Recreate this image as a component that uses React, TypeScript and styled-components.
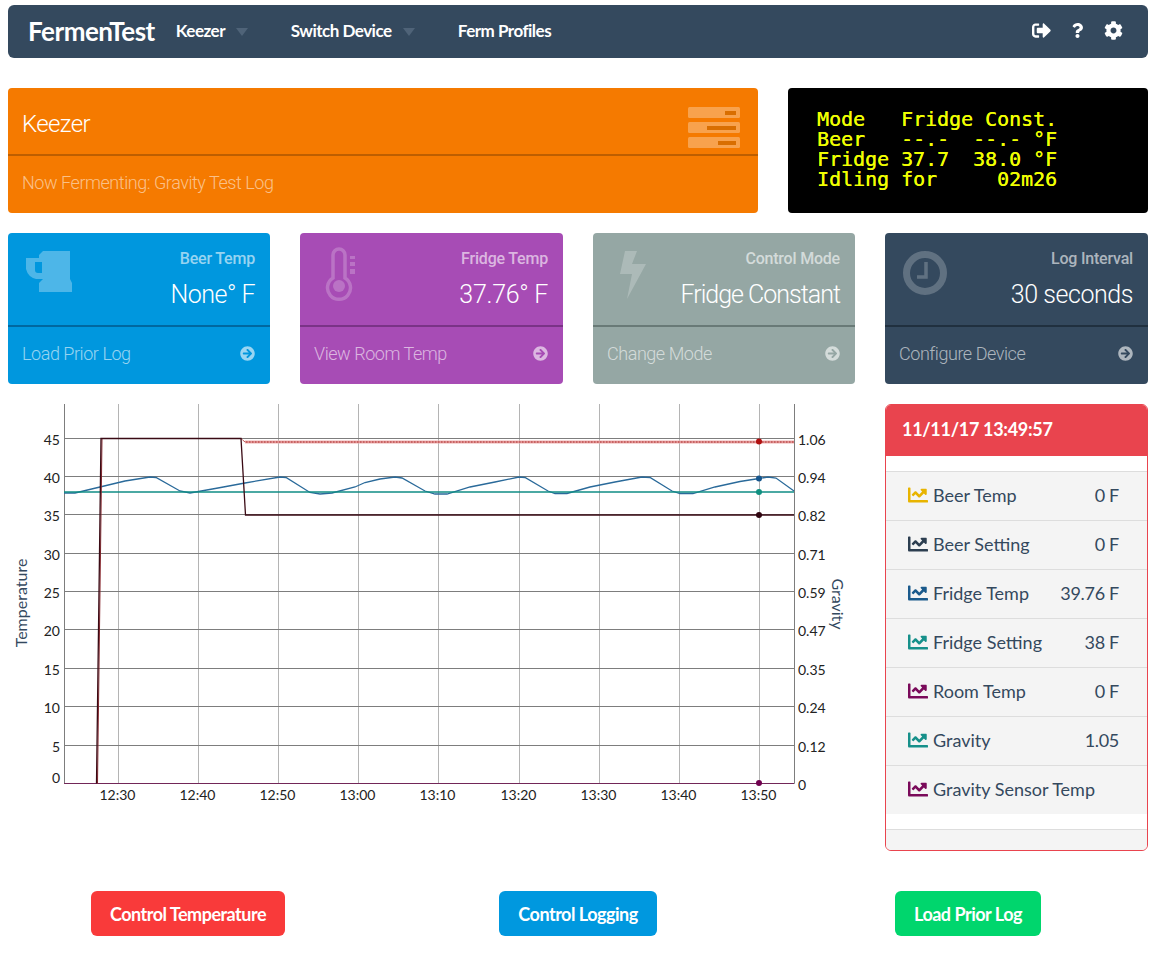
import React from 'react';
import styled, { createGlobalStyle } from 'styled-components';
import { FaArrowCircleRight, FaChartLine, FaCog, FaQuestion, FaSignOutAlt } from 'react-icons/fa';

/* -------------------- Style ------------------- */
const GlobalStyle = createGlobalStyle`
  html, body {
    margin: 0;
    padding: 0;
    background: #fff;
  }
  body {
    font-family: Lato, "Liberation Sans", sans-serif;
    color: #34495e;
  }
`;

const lightFont = `Roboto, "Liberation Sans", sans-serif`;

const Page = styled.div`
  width: 1140px;
  margin-left: 8px;
  padding-top: 5px;
  padding-bottom: 33px;
`;

const Navbar = styled.nav`
  display: flex;
  align-items: center;
  box-sizing: border-box;
  height: 53px;
  padding: 0 25px 2px 20px;
  margin-bottom: 30px;
  background: #34495e;
  border-radius: 6px;
  color: #fff;
`;

const Brand = styled.div`
  font-size: 26px;
  font-weight: 700;
  letter-spacing: -0.5px;
  margin-right: 21px;
`;

const NavItem = styled.div<{ $width: number }>`
  display: flex;
  align-items: center;
  width: ${(p) => p.$width}px;
  font-size: 17px;
  font-weight: 700;
  letter-spacing: -0.5px;
`;

const Caret = styled.span`
  width: 0;
  height: 0;
  margin-left: 11px;
  margin-top: 3px;
  border-left: 6px solid transparent;
  border-right: 6px solid transparent;
  border-top: 8px solid #4f6378;
`;

const NavIcons = styled.div`
  display: flex;
  align-items: center;
  gap: 19px;
  margin-left: auto;
  svg {
    display: block;
  }
`;

const TopRow = styled.div`
  display: grid;
  grid-template-columns: 750px 360px;
  gap: 30px;
  height: 125px;
  margin-bottom: 20px;
`;

const Banner = styled.section`
  display: flex;
  flex-direction: column;
  background: #f57a00;
  border-radius: 4px;
  color: #fff;
  font-family: ${lightFont};
  font-weight: 300;
`;

const BannerHead = styled.div`
  display: flex;
  align-items: center;
  justify-content: space-between;
  box-sizing: border-box;
  height: 68px;
  padding: 6px 18px 0 14px;
  border-bottom: 2px solid #bd5e00;
  font-size: 24px;
  letter-spacing: -0.6px;
`;

const ServerIcon = styled.svg`
  margin-top: 6px;
`;

const BannerFoot = styled.div`
  flex: 1;
  display: flex;
  align-items: center;
  padding: 0 0 4px 14px;
  font-size: 18px;
  letter-spacing: -0.45px;
  color: rgba(255, 255, 255, 0.55);
`;

const Lcd = styled.pre`
  margin: 0;
  padding: 22px 0 0 29px;
  background: #000;
  border-radius: 4px;
  color: #f0ff00;
  font-family: "DejaVu Sans Mono", "Liberation Mono", monospace;
  font-size: 19.93px;
  line-height: 20px;
  text-shadow: 0.25px 0 0 currentColor;
`;

const CardRow = styled.div`
  display: grid;
  grid-template-columns: 262px 263px 262px 263px;
  gap: 30px;
  height: 151px;
  margin-bottom: 20px;
`;

const Card = styled.article<{ $bg: string }>`
  display: flex;
  flex-direction: column;
  background: ${(p) => p.$bg};
  border-radius: 4px;
  color: #fff;
  font-family: ${lightFont};
`;

const CardHead = styled.div<{ $line: string }>`
  position: relative;
  box-sizing: border-box;
  height: 94px;
  padding: 17px 15px 0;
  border-bottom: 2px solid ${(p) => p.$line};
  text-align: right;
`;

const CardIcon = styled.svg`
  position: absolute;
  left: 0;
  top: 0;
`;

const CardTitle = styled.div`
  font-size: 16px;
  line-height: 18px;
  font-weight: 500;
  letter-spacing: -0.2px;
  color: rgba(255, 255, 255, 0.6);
`;

const CardValue = styled.div<{ $spacing: number }>`
  margin-top: 12px;
  font-size: 25px;
  line-height: 30px;
  font-weight: 300;
  letter-spacing: ${(p) => p.$spacing}px;
`;

const CardFoot = styled.div`
  flex: 1;
  display: flex;
  align-items: center;
  justify-content: space-between;
  padding: 0 15px 5px 14px;
  font-size: 18px;
  font-weight: 300;
  letter-spacing: -0.45px;
  color: rgba(255, 255, 255, 0.6);
`;

const MainRow = styled.div`
  display: grid;
  grid-template-columns: 847px 263px;
  gap: 30px;
  height: 447px;
  margin-bottom: 40px;
`;

const ChartSvg = styled.svg`
  display: block;
  font-family: Lato, sans-serif;
`;

const StatusPanel = styled.aside`
  display: flex;
  flex-direction: column;
  box-sizing: border-box;
  border: 1px solid #e9444e;
  border-radius: 6px;
  overflow: hidden;
`;

const StatusHead = styled.div`
  height: 51px;
  padding: 0 0 0 16px;
  background: #e9444e;
  color: #fff;
  font-size: 18px;
  font-weight: 700;
  letter-spacing: -0.3px;
  line-height: 49px;
`;

const StatusList = styled.ul`
  list-style: none;
  margin: 15px 0;
  padding: 0;
`;

const StatusItem = styled.li`
  display: flex;
  align-items: center;
  justify-content: space-between;
  box-sizing: border-box;
  height: 49px;
  padding: 0 28px 2px 22px;
  background: #f4f4f4;
  border-top: 1px solid #ddd;
  font-size: 18px;
`;

const StatusName = styled.span<{ $color: string }>`
  display: flex;
  align-items: center;
  gap: 5px;
  svg {
    color: ${(p) => p.$color};
  }
`;

const StatusValue = styled.span`
  letter-spacing: -0.3px;
`;

const StatusFoot = styled.div`
  flex: 1;
  background: #f4f4f4;
  border-top: 1px solid #ddd;
`;

const ActionRow = styled.div`
  display: grid;
  grid-template-columns: repeat(3, 390px);
  margin: 0 -15px;
  justify-items: center;
`;

const ActionButton = styled.button<{ $bg: string }>`
  height: 45px;
  padding: 0 19px;
  border: 0;
  border-radius: 6px;
  background: ${(p) => p.$bg};
  color: #fff;
  font-family: Lato, sans-serif;
  font-size: 18px;
  font-weight: 700;
  letter-spacing: -0.5px;
`;

/* -------------------- Data -------------------- */
const lcdText = `Mode   Fridge Const.
Beer   --.-  --.- °F
Fridge 37.7  38.0 °F
Idling for     02m26`;

const ICON = 'rgba(255,255,255,0.3)';
const ICON_SOFT = 'rgba(255,255,255,0.22)';

const cards = [
  {
    title: 'Beer Temp', value: 'None° F', foot: 'Load Prior Log', bg: '#0097de', line: '#0068a0', spacing: -0.5,
    icon: (
      <path
        fill={ICON}
        fillRule="evenodd"
        d="M35 18H62V46L64 50V59H31V50L35 46H28Q20 44 18 36V25H31V22ZM27 29V37Q27 40 30 40H34V29Z"
      />
    ),
  },
  {
    title: 'Fridge Temp', value: '37.76° F', foot: 'View Room Temp', bg: '#a74cb5', line: '#7a3386', spacing: -0.3,
    icon: (
      <g fill={ICON_SOFT}>
        <path
          fill="none"
          stroke={ICON_SOFT}
          strokeWidth="3.5"
          d="M33 45V22a6 6 0 0 1 12 0V45a11.5 11.5 0 1 1-12 0Z"
        />
        <circle cx="39" cy="53" r="6" />
        <rect x="50" y="23" width="5" height="3" />
        <rect x="50" y="29" width="5" height="4" />
        <rect x="50" y="36" width="5" height="5" />
      </g>
    ),
  },
  {
    title: 'Control Mode', value: 'Fridge Constant', foot: 'Change Mode', bg: '#95a7a4', line: '#697a77', spacing: -1,
    icon: <polygon fill={ICON_SOFT} points="32,18 44,18 39,31 53,31 34,66 39,41 27,41" />,
  },
  {
    title: 'Log Interval', value: '30 seconds', foot: 'Configure Device', bg: '#34495e', line: '#20303f', spacing: -0.45,
    icon: (
      <g fill="none" stroke={ICON_SOFT}>
        <circle cx="40" cy="40" r="18.5" strokeWidth="7" />
        <path strokeWidth="3.5" d="M41 29V44H32" />
      </g>
    ),
  },
];

const series = [
  { name: 'Beer Temp', value: '0 F', color: '#e8b400' },
  { name: 'Beer Setting', value: '0 F', color: '#2c3e50' },
  { name: 'Fridge Temp', value: '39.76 F', color: '#1a5a8c' },
  { name: 'Fridge Setting', value: '38 F', color: '#16908a' },
  { name: 'Room Temp', value: '0 F', color: '#7a0a5a' },
  { name: 'Gravity', value: '1.05', color: '#16908a' },
  { name: 'Gravity Sensor Temp', value: '', color: '#7a0a5a' },
];

const horizontal = [
  { y: 438.5, left: '45', right: '1.06', ly: 440 },
  { y: 476.5, left: '40', right: '0.94', ly: 478 },
  { y: 514.5, left: '35', right: '0.82', ly: 516 },
  { y: 553.5, left: '30', right: '0.71', ly: 555 },
  { y: 591.5, left: '25', right: '0.59', ly: 593 },
  { y: 629.5, left: '20', right: '0.47', ly: 631 },
  { y: 668.5, left: '15', right: '0.35', ly: 670 },
  { y: 706.5, left: '10', right: '0.24', ly: 708 },
  { y: 745.5, left: '5', right: '0.12', ly: 747 },
];

const vertical = [
  { x: 118.5, label: '12:30' },
  { x: 198.5, label: '12:40' },
  { x: 278.5, label: '12:50' },
  { x: 358.5, label: '13:00' },
  { x: 438.5, label: '13:10' },
  { x: 519.5, label: '13:20' },
  { x: 599.5, label: '13:30' },
  { x: 679.5, label: '13:40' },
  { x: 759.5, label: '13:50' },
];

const bluePath =
  'M64 493L75 493L100 487L125 481L150 477L156 477.5L180 491L190 493L218 488L245 483L280 477L286 477.5L310 492.5L320 494L332 493L355 487L365 482.5L380 479L395 477L402 478L425 491L435 494L447 494L470 487L495 482L519 477L525 477.5L548 491L555 493.5L567 493.5L590 487L615 482L642 477L650 477.5L672 491L680 493.5L693 493.5L715 487L740 481.5L759 478.5L768 477L776 478L794 491';

/* -------------------- DOM --------------------- */
const Chart = () => (
  <ChartSvg width="847" height="447" viewBox="8 404 847 447">
    {vertical.map((v) => (
      <line key={v.x} x1={v.x} x2={v.x} y1="404" y2="783" stroke="#b4b4b4" />
    ))}
    {horizontal.map((h) => (
      <line key={h.y} x1="64" x2="794" y1={h.y} y2={h.y} stroke="#7d7d7d" />
    ))}
    <path d="M64.5 404V783.5H794.5V404" fill="none" stroke="#7d7d7d" />

    <path d="M245 442H794" fill="none" stroke="#f0b0b0" strokeWidth="3" />
    <path d="M241 438.5L245 442H794" fill="none" stroke="#a01818" strokeWidth="1" strokeDasharray="2 1" />
    <path d={bluePath} fill="none" stroke="#2a6a9a" strokeWidth="1.3" />
    <path d="M64 492H794" fill="none" stroke="#0f8c84" strokeWidth="1.3" />
    <path d="M64 783.5H794" fill="none" stroke="#70104f" strokeWidth="0.8" />
    <path d="M97.5 783.5L102 438.5" fill="none" stroke="#8a2a30" strokeWidth="1" />
    <path d="M96.5 783.5L101 438.5H241L245.5 515H794" fill="none" stroke="#3a0a14" strokeWidth="1.3" />

    <circle cx="759" cy="441.5" r="3" fill="#b01010" />
    <circle cx="759" cy="478.5" r="3" fill="#15558c" />
    <circle cx="759" cy="492" r="3" fill="#109080" />
    <circle cx="759" cy="515" r="3" fill="#300510" />
    <circle cx="759" cy="783" r="3" fill="#70004f" />

    <g fontSize="14" fill="#222">
      {horizontal.map((h) => (
        <text key={h.left} x="60" y={h.ly + 5} textAnchor="end">{h.left}</text>
      ))}
      <text x="60" y="783" textAnchor="end">0</text>
      {horizontal.map((h) => (
        <text key={h.right} x="798" y={h.ly + 5}>{h.right}</text>
      ))}
      <text x="798" y="790">0</text>
      {vertical.map((v) => (
        <text key={v.label} x={v.x - 1} y="800" textAnchor="middle">{v.label}</text>
      ))}
    </g>
    <text x="0" y="0" fontSize="16" fill="#34495e" textAnchor="middle" transform="translate(27 603) rotate(-90)">
      Temperature
    </text>
    <text x="0" y="0" fontSize="16" fill="#34495e" textAnchor="middle" transform="translate(832 604) rotate(90)">
      Gravity
    </text>
  </ChartSvg>
);

const App = () => (
  <Page>
    <GlobalStyle />
    <Navbar>
      <Brand>FermenTest</Brand>
      <NavItem $width={115}>Keezer<Caret /></NavItem>
      <NavItem $width={167}>Switch Device<Caret /></NavItem>
      <NavItem $width={110}>Ferm Profiles</NavItem>
      <NavIcons>
        <FaSignOutAlt size={19} />
        <FaQuestion size={15} />
        <FaCog size={19} />
      </NavIcons>
    </Navbar>

    <TopRow>
      <Banner>
        <BannerHead>
          Keezer
          <ServerIcon width="52" height="41" viewBox="0 0 52 41" fill="rgba(255,255,255,0.3)">
            <rect y="0" width="52" height="11" rx="1.5" />
            <rect y="15" width="52" height="11" rx="1.5" />
            <rect y="30" width="52" height="11" rx="1.5" />
            <rect x="37" y="4" width="11" height="4" fill="#d96e00" />
            <rect x="19" y="19" width="29" height="4" fill="#d96e00" />
            <rect x="30" y="34" width="18" height="4" fill="#d96e00" />
          </ServerIcon>
        </BannerHead>
        <BannerFoot>Now Fermenting: Gravity Test Log</BannerFoot>
      </Banner>
      <Lcd>{lcdText}</Lcd>
    </TopRow>

    <CardRow>
      {cards.map((c) => (
        <Card key={c.title} $bg={c.bg}>
          <CardHead $line={c.line}>
            <CardIcon width="80" height="80" viewBox="0 0 80 80">{c.icon}</CardIcon>
            <CardTitle>{c.title}</CardTitle>
            <CardValue $spacing={c.spacing}>{c.value}</CardValue>
          </CardHead>
          <CardFoot>
            {c.foot}
            <FaArrowCircleRight size={15} />
          </CardFoot>
        </Card>
      ))}
    </CardRow>

    <MainRow>
      <Chart />
      <StatusPanel>
        <StatusHead>11/11/17 13:49:57</StatusHead>
        <StatusList>
          {series.map((s) => (
            <StatusItem key={s.name}>
              <StatusName $color={s.color}>
                <FaChartLine size={20} />
                {s.name}
              </StatusName>
              <StatusValue>{s.value}</StatusValue>
            </StatusItem>
          ))}
        </StatusList>
        <StatusFoot />
      </StatusPanel>
    </MainRow>

    <ActionRow>
      <ActionButton $bg="#f93a3a">Control Temperature</ActionButton>
      <ActionButton $bg="#0098df">Control Logging</ActionButton>
      <ActionButton $bg="#00d66d">Load Prior Log</ActionButton>
    </ActionRow>
  </Page>
);

export default App;
